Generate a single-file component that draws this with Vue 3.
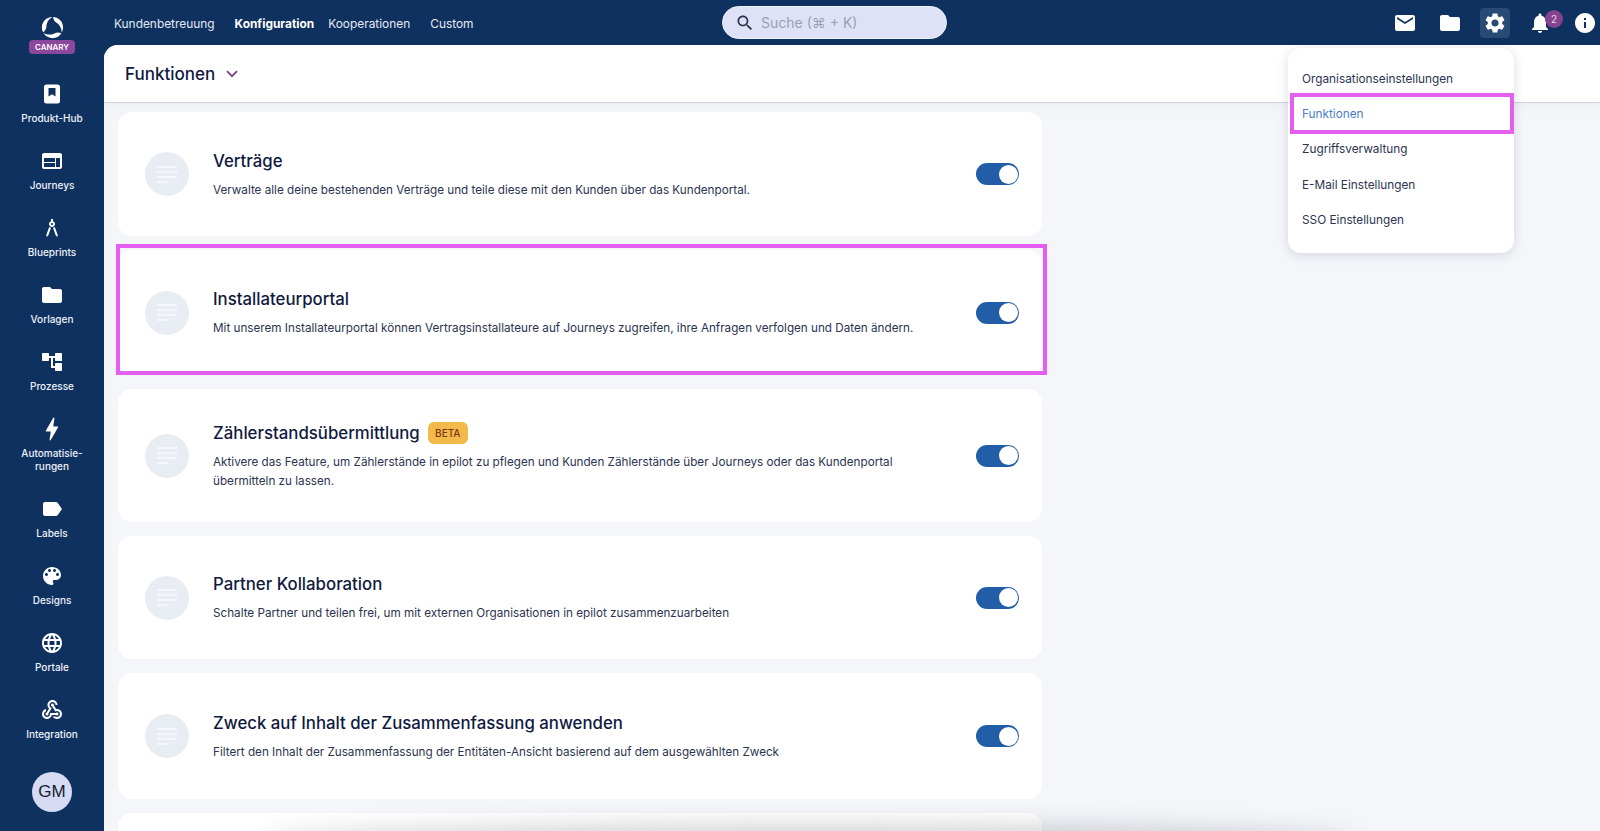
<template>
  <div class="app">
    <aside class="sidebar">
      <div class="brand">
        <svg class="logo" viewBox="0 0 24 24" fill="#fff">
          <path v-for="r in [0, 120, 240]" :key="r" :transform="`rotate(${r} 12 12)`" d="M12.500 1C18 1 22.800 5.500 23 11.500 23.100 13.500 22.600 15.500 21.600 17.200 21.600 12.500 19 8.500 15.800 6.800 14 5.800 13 3.500 12.500 1z" />
        </svg>
        <span class="canary">CANARY</span>
      </div>
      <nav class="side-nav">
        <a v-for="item in sideItems" :key="item.label" class="side-item">
          <span class="side-icon">
            <svg :width="item.size" :height="item.size" viewBox="0 0 24 24" fill="#fff" fill-rule="evenodd">
              <path :d="item.icon" />
            </svg>
          </span>
          <span class="side-label">{{ item.label }}</span>
        </a>
      </nav>
      <div class="avatar">GM</div>
    </aside>

    <div class="right">
      <header class="topbar">
        <nav class="top-nav">
          <a class="top-link">Kundenbetreuung</a>
          <a class="top-link active">Konfiguration</a>
          <a class="top-link">Kooperationen</a>
          <a class="top-link">Custom</a>
        </nav>
        <div class="search">
          <svg viewBox="0 0 24 24" width="20" height="20" fill="#2b3350"><path :d="icons.search" /></svg>
          <span>Suche (⌘ + K)</span>
        </div>
        <div class="top-icons">
          <span class="top-btn"><svg viewBox="0 0 24 24" width="24" height="24" fill="#fff"><path :d="icons.mail" /></svg></span>
          <span class="top-btn"><svg viewBox="0 0 24 24" width="24" height="24" fill="#fff"><path :d="icons.folder" /></svg></span>
          <span class="top-btn on"><svg viewBox="0 0 24 24" width="24" height="24" fill="#fff"><path :d="icons.gear" /></svg></span>
          <span class="top-btn bell">
            <svg viewBox="0 0 24 24" width="24" height="24" fill="#fff"><path :d="icons.bell" /></svg>
            <b class="badge">2</b>
          </span>
          <span class="top-btn"><svg viewBox="0 0 24 24" width="24" height="24" fill="#fff"><path :d="icons.info" /></svg></span>
        </div>
      </header>

      <main class="main">
        <div class="page-head">
          <h1>Funktionen</h1>
          <svg viewBox="0 0 12 8" width="12" height="8" fill="none" stroke="#7b3f8f" stroke-width="1.7"><path d="M1 1.200l5 5 5-5" /></svg>
        </div>
        <section class="cards">
          <article
            v-for="card in cards"
            :key="card.title"
            class="card"
            :class="{ marked: card.marked }"
            :style="{ height: card.height + 'px' }"
          >
            <div class="round-icon">
              <i></i><i></i><i></i><i class="short"></i>
            </div>
            <div class="card-text">
              <h2>{{ card.title }}<span v-if="card.beta" class="beta">BETA</span></h2>
              <p>{{ card.text }}</p>
            </div>
            <span v-if="card.text" class="toggle"><span class="knob"></span></span>
          </article>
        </section>
        <div class="floor-shadow"></div>
      </main>
    </div>

    <div class="menu">
      <a v-for="m in menuItems" :key="m" class="menu-item" :class="{ current: m === 'Funktionen' }">{{ m }}</a>
    </div>
  </div>
</template>

<script setup>
const icons = {
  search: 'M15.500 14h-.79l-.28-.27C15.410 12.590 16 11.110 16 9.500 16 5.910 13.090 3 9.500 3S3 5.910 3 9.500 5.910 16 9.500 16c1.610 0 3.090-.59 4.230-1.570l.27.28v.79l5 4.990L20.490 19l-4.990-5zm-6 0C7.010 14 5 11.990 5 9.500S7.010 5 9.500 5 14 7.010 14 9.500 11.990 14 9.500 14z',
  mail: 'M20 4H4c-1.100 0-1.990.9-1.990 2L2 18c0 1.100.9 2 2 2h16c1.100 0 2-.9 2-2V6c0-1.100-.9-2-2-2zm0 4l-8 5-8-5V6l8 5 8-5v2z',
  folder: 'M10 4H4c-1.100 0-1.990.9-1.990 2L2 18c0 1.100.9 2 2 2h16c1.100 0 2-.9 2-2V8c0-1.100-.9-2-2-2h-8l-2-2z',
  gear: 'M19.140 12.940c.04-.3.06-.61.06-.94 0-.32-.02-.64-.07-.94l2.030-1.580c.18-.14.23-.41.12-.61l-1.920-3.320c-.12-.22-.37-.29-.59-.22l-2.390.96c-.5-.38-1.030-.7-1.620-.94l-.36-2.540c-.04-.24-.24-.41-.48-.41h-3.840c-.24 0-.43.17-.47.41l-.36 2.540c-.59.24-1.130.57-1.620.94l-2.390-.96c-.22-.08-.47 0-.59.22L2.740 8.870c-.12.21-.08.47.12.61l2.030 1.580c-.05.3-.09.63-.09.94s.02.64.07.94l-2.030 1.580c-.18.14-.23.41-.12.61l1.920 3.320c.12.22.37.29.59.22l2.390-.96c.5.38 1.030.7 1.620.94l.36 2.540c.05.24.24.41.48.41h3.840c.24 0 .44-.17.47-.41l.36-2.540c.59-.24 1.130-.56 1.620-.94l2.390.96c.22.08.47 0 .59-.22l1.920-3.320c.12-.22.07-.47-.12-.61l-2.010-1.580zM12 15.600c-1.980 0-3.600-1.620-3.600-3.600s1.620-3.600 3.600-3.600 3.600 1.620 3.600 3.600-1.620 3.600-3.600 3.600z',
  bell: 'M12 22c1.100 0 2-.9 2-2h-4c0 1.100.89 2 2 2zm6-6v-5c0-3.070-1.640-5.640-4.500-6.320V4c0-.83-.67-1.500-1.500-1.500s-1.500.67-1.500 1.500v.68C7.630 5.360 6 7.920 6 11v5l-2 2v1h16v-1l-2-2z',
  info: 'M12 2C6.480 2 2 6.480 2 12s4.480 10 10 10 10-4.480 10-10S17.520 2 12 2zm1 15h-2v-6h2v6zm0-8h-2V7h2v2z',
}

const sideItems = [
  { label: 'Produkt-Hub', size: 24, icon: 'M6.500 2.500h11A2.500 2.500 0 0120 5v14a2.500 2.500 0 01-2.500 2.500h-11A2.500 2.500 0 014 19V5a2.500 2.500 0 012.500-2.500zM8.500 6v8.500l3.500-2.200 3.500 2.200V6z' },
  { label: 'Journeys', size: 24, icon: 'M20 4H4c-1.100 0-1.990.9-1.990 2L2 18c0 1.100.9 2 2 2h16c1.100 0 2-.9 2-2V6c0-1.100-.9-2-2-2zm-5 14H4v-4h11v4zm0-5H4V9h11v4zm5 5h-4V9h4v9z' },
  { label: 'Blueprints', size: 24, icon: 'M6.360 18.780L6.610 21l1.620-1.540 2.770-7.600c-.68-.17-1.280-.51-1.770-.98L6.360 18.780zM14.770 10.880c-.49.47-1.100.81-1.770.98l2.770 7.600L17.390 21l.26-2.220-2.880-7.900zM15 8c0-1.300-.84-2.400-2-2.820V3h-2v2.180C9.840 5.600 9 6.700 9 8c0 1.660 1.340 3 3 3s3-1.340 3-3zm-3 1c-.55 0-1-.45-1-1s.45-1 1-1 1 .45 1 1-.45 1-1 1z' },
  { label: 'Vorlagen', size: 24, icon: icons.folder },
  { label: 'Prozesse', size: 24, icon: 'M22 11V3.800c0-.4-.4-.8-.8-.8h-5.400c-.4 0-.8.4-.8.8V6H9V3.800c0-.4-.4-.8-.8-.8H2.800c-.4 0-.8.4-.8.8v6.400c0 .4.4.8.8.8h5.400c.4 0 .8-.4.8-.8V8h2v10h4v2.200c0 .4.4.8.8.8h5.400c.4 0 .8-.4.8-.8v-6.400c0-.4-.4-.8-.8-.8h-5.400c-.4 0-.8.4-.8.8V16h-2V8h2v2.200c0 .4.4.8.8.8z' },
  { label: 'Automatisie-rungen', size: 30, icon: 'M11 21h-1l1-7H7.500c-.58 0-.57-.32-.38-.66.19-.34.05-.08.07-.12C8.480 10.940 10.420 7.540 13 3h1l-1 7h3.500c.49 0 .56.33.47.51l-.07.15C12.960 17.550 11 21 11 21z' },
  { label: 'Labels', size: 24, icon: 'M17.630 5.840C17.270 5.330 16.670 5 16 5L5 5.010C3.900 5.010 3 5.900 3 7v10c0 1.100.9 1.990 2 1.990L16 19c.67 0 1.270-.33 1.630-.84L22 12l-4.370-6.160z' },
  { label: 'Designs', size: 24, icon: 'M12 3c-4.970 0-9 4.030-9 9s4.030 9 9 9c.83 0 1.500-.67 1.500-1.500 0-.39-.15-.74-.39-1.010-.23-.26-.38-.61-.38-.99 0-.83.67-1.500 1.500-1.500H16c2.760 0 5-2.240 5-5 0-4.420-4.030-8-9-8zm-5.500 9c-.83 0-1.500-.67-1.500-1.500S5.670 9 6.500 9 8 9.670 8 10.500 7.330 12 6.500 12zm3-4C8.670 8 8 7.330 8 6.500S8.670 5 9.500 5s1.500.67 1.500 1.500S10.330 8 9.500 8zm5 0c-.83 0-1.500-.67-1.500-1.500S13.670 5 14.500 5s1.500.67 1.500 1.500S15.330 8 14.500 8zm3 4c-.83 0-1.500-.67-1.500-1.500S16.670 9 17.500 9s1.500.67 1.500 1.500-.67 1.500-1.500 1.500z' },
  { label: 'Portale', size: 24, icon: 'M11.990 2C6.470 2 2 6.480 2 12s4.470 10 9.990 10C17.520 22 22 17.520 22 12S17.520 2 11.990 2zm6.930 6h-2.950c-.32-1.250-.78-2.450-1.380-3.560 1.840.63 3.370 1.910 4.330 3.560zM12 4.040c.83 1.200 1.480 2.530 1.910 3.960h-3.820c.43-1.430 1.080-2.760 1.910-3.960zM4.260 14C4.100 13.360 4 12.690 4 12s.1-1.360.26-2h3.380c-.08.66-.14 1.320-.14 2 0 .68.06 1.340.14 2H4.260zm.82 2h2.950c.32 1.250.78 2.450 1.380 3.560-1.840-.63-3.370-1.900-4.330-3.560zm2.950-8H5.080c.96-1.660 2.490-2.930 4.330-3.560C8.810 5.550 8.350 6.750 8.030 8zM12 19.960c-.83-1.200-1.480-2.530-1.910-3.960h3.820c-.43 1.430-1.080 2.760-1.910 3.960zM14.340 14H9.660c-.09-.66-.16-1.320-.16-2 0-.68.07-1.350.16-2h4.680c.09.65.16 1.320.16 2 0 .68-.07 1.340-.16 2zm.25 5.560c.6-1.110 1.060-2.310 1.380-3.560h2.950c-.96 1.650-2.490 2.930-4.330 3.560zM16.360 14c.08-.66.14-1.320.14-2 0-.68-.06-1.340-.14-2h3.380c.16.64.26 1.310.26 2s-.1 1.360-.26 2h-3.380z' },
  { label: 'Integration', size: 24, icon: 'M10 15h5.880c.27-.31.67-.5 1.120-.5.83 0 1.500.67 1.500 1.500s-.67 1.500-1.500 1.500c-.44 0-.84-.19-1.120-.5H11.900c-.46 2.280-2.480 4-4.900 4-2.760 0-5-2.240-5-5 0-2.420 1.720-4.440 4-4.900v2.070c-1.160.41-2 1.530-2 2.830 0 1.650 1.350 3 3 3s3-1.350 3-3v-1zm2.500-11c1.650 0 3 1.350 3 3h2c0-2.760-2.240-5-5-5s-5 2.240-5 5c0 1.430.6 2.710 1.550 3.620l-2.350 3.900c-.68.14-1.200.75-1.200 1.480 0 .83.67 1.500 1.500 1.500s1.500-.67 1.500-1.500c0-.16-.02-.31-.07-.45l3.380-5.630C10.490 9.610 9.500 8.420 9.500 7c0-1.650 1.350-3 3-3zm4.500 9c-.64 0-1.230.2-1.720.54l-3.050-5.070C11.530 8.350 11 7.740 11 7c0-.83.67-1.500 1.500-1.500S14 6.170 14 7c0 .15-.02.29-.06.43l2.190 3.650c.28-.05.57-.08.87-.08 2.760 0 5 2.240 5 5s-2.240 5-5 5c-1.850 0-3.470-1.010-4.330-2.500h2.670c.48.32 1.050.5 1.660.5 1.650 0 3-1.350 3-3s-1.350-3-3-3z' },
]

const cards = [
  { title: 'Verträge', text: 'Verwalte alle deine bestehenden Verträge und teile diese mit den Kunden über das Kundenportal.', height: 124 },
  { title: 'Installateurportal', text: 'Mit unserem Installateurportal können Vertragsinstallateure auf Journeys zugreifen, ihre Anfragen verfolgen und Daten ändern.', height: 125, marked: true },
  { title: 'Zählerstandsübermittlung', beta: true, text: 'Aktivere das Feature, um Zählerstände in epilot zu pflegen und Kunden Zählerstände über Journeys oder das Kundenportal übermitteln zu lassen.', height: 133 },
  { title: 'Partner Kollaboration', text: 'Schalte Partner und teilen frei, um mit externen Organisationen in epilot zusammenzuarbeiten', height: 123 },
  { title: 'Zweck auf Inhalt der Zusammenfassung anwenden', text: 'Filtert den Inhalt der Zusammenfassung der Entitäten-Ansicht basierend auf dem ausgewählten Zweck', height: 126 },
  { title: '', text: '', height: 126 },
]

const menuItems = ['Organisationseinstellungen', 'Funktionen', 'Zugriffsverwaltung', 'E-Mail Einstellungen', 'SSO Einstellungen']
</script>

<style>
html, body {
  margin: 0;
  height: 100%;
  overflow: hidden;
}
</style>

<style scoped>
.app {
  position: relative;
  display: flex;
  width: 1600px;
  height: 831px;
  overflow: hidden;
  background: #0f3160;
  font-family: "Inter", "Lato", sans-serif;
  color: #10193f;
}

.sidebar {
  width: 104px;
  flex: none;
  display: flex;
  flex-direction: column;
  align-items: center;
  color: #fff;
}

.brand {
  height: 72px;
  padding-top: 16px;
  box-sizing: border-box;
  display: flex;
  flex-direction: column;
  align-items: center;
}

.logo {
  width: 23px;
  height: 23px;
}

.canary {
  width: 46px;
  height: 14px;
  margin-top: 1px;
  border-radius: 4px;
  background: #8b479b;
  font-size: 8px;
  font-weight: 600;
  line-height: 14px;
  text-align: center;
}

.side-nav {
  display: flex;
  flex-direction: column;
  align-items: center;
  width: 100%;
}

.side-item {
  display: flex;
  flex-direction: column;
  align-items: center;
  width: 72px;
  padding-top: 10px;
  padding-bottom: 14.500px;
}

.side-icon {
  height: 24px;
  display: flex;
  align-items: center;
  justify-content: center;
}

.side-label {
  margin-top: 5.500px;
  font-size: 10px;
  font-weight: 500;
  line-height: 13px;
  text-align: center;
  overflow-wrap: break-word;
  color: #eef1f8;
}

.avatar {
  width: 40px;
  height: 40px;
  margin-top: 17px;
  border-radius: 50%;
  background: #d6daf3;
  color: #141a2c;
  font-family: "Liberation Sans", sans-serif;
  font-size: 17px;
  line-height: 40px;
  text-align: center;
}

.right {
  flex: 1;
  min-width: 0;
  display: flex;
  flex-direction: column;
}

.topbar {
  position: relative;
  height: 45px;
  flex: none;
  display: flex;
  align-items: center;
}

.top-nav {
  display: flex;
  gap: 20px;
  padding: 1px 0 0 10px;
}

.top-link {
  font-size: 11.900px;
  color: #e6eaf4;
}

.top-link.active {
  margin-right: -6px;
  font-weight: 700;
  color: #fff;
}

.search {
  position: absolute;
  left: 618px;
  top: 6px;
  width: 225px;
  height: 33px;
  box-sizing: border-box;
  padding-left: 12px;
  display: flex;
  align-items: center;
  gap: 6px;
  border: 1px solid #f0f2fc;
  border-radius: 17px;
  background: #dfe2f7;
  font-size: 14px;
  color: #9a9fb8;
}

.top-icons {
  margin-left: auto;
  display: flex;
  align-items: center;
  gap: 15px;
}

.top-btn {
  position: relative;
  width: 30px;
  height: 30px;
  display: flex;
  align-items: center;
  justify-content: center;
  border-radius: 4px;
}

.top-btn.on {
  background: #2a4a76;
}

.badge {
  position: absolute;
  left: 20px;
  top: 2px;
  width: 18px;
  height: 18px;
  border-radius: 50%;
  background: #86418f;
  color: #e9d8ef;
  font-size: 10px;
  font-weight: 400;
  line-height: 18px;
  text-align: center;
}

.main {
  position: relative;
  flex: 1;
  min-height: 0;
  overflow: hidden;
  border-top-left-radius: 14px;
  background: #f4f6fa;
}

.page-head {
  position: relative;
  height: 58px;
  box-sizing: border-box;
  padding-left: 21px;
  display: flex;
  align-items: center;
  gap: 11px;
  background: #fff;
  border-bottom: 1px solid #cfd2d8;
  box-shadow: 0 4px 12px rgba(30, 40, 70, 0.04);
}

.page-head h1 {
  margin: 0;
  font-size: 17px;
  font-weight: 500;
  color: #10193f;
}

.cards {
  display: flex;
  flex-direction: column;
  gap: 14px;
  width: 924px;
  margin: 9px 0 0 14px;
}

.card {
  position: relative;
  flex: none;
  box-sizing: border-box;
  display: flex;
  align-items: center;
  padding: 0 23px 0 27px;
  border-radius: 14px;
  background: #fff;
}

.card.marked::after {
  content: "";
  position: absolute;
  left: -2.500px;
  right: -5px;
  top: -6px;
  bottom: 0;
  border: 4.500px solid #e45ff0;
}

.round-icon {
  width: 44px;
  height: 44px;
  flex: none;
  border-radius: 50%;
  background: #e8edf4;
  display: flex;
  flex-direction: column;
  justify-content: center;
  gap: 3px;
  padding-left: 12px;
  box-sizing: border-box;
}

.round-icon i {
  width: 20px;
  height: 2px;
  background: #f5f7fb;
}

.round-icon i.short {
  width: 12px;
}

.card-text {
  flex: 1;
  min-width: 0;
  margin-left: 24px;
  padding-right: 40px;
}

.card-text h2 {
  margin: 0 0 8px;
  display: flex;
  align-items: center;
  min-height: 24px;
  font-size: 16.800px;
  font-weight: 500;
  line-height: 24px;
  color: #10193f;
}

.card-text p {
  margin: 0;
  font-size: 11.700px;
  line-height: 19px;
  color: #2c3452;
}

.beta {
  margin-left: 8px;
  width: 40px;
  height: 22px;
  border-radius: 6px;
  background: #f2b94b;
  color: #7a3a10;
  font-size: 10px;
  font-weight: 500;
  line-height: 22px;
  text-align: center;
}

.toggle {
  width: 43px;
  height: 22px;
  flex: none;
  box-sizing: border-box;
  border-radius: 11px;
  background: #225ea8;
  display: flex;
  justify-content: flex-end;
  padding: 1.500px;
}

.knob {
  width: 19px;
  height: 19px;
  border-radius: 50%;
  background: #fff;
}

.floor-shadow {
  position: absolute;
  left: 170px;
  right: 250px;
  bottom: -22px;
  height: 16px;
  border-radius: 50%;
  box-shadow: 0 -2px 24px 10px rgba(40, 44, 52, 0.22);
}

.menu {
  position: absolute;
  left: 1288px;
  top: 48px;
  width: 226px;
  height: 205px;
  box-sizing: border-box;
  padding-top: 14px;
  border-radius: 13px;
  background: #fff;
  box-shadow: 0 2px 12px rgba(40, 50, 80, 0.16);
}

.menu-item {
  position: relative;
  display: block;
  height: 35.200px;
  padding-left: 14px;
  font-size: 11.800px;
  line-height: 35.200px;
  color: #2c3452;
}

.menu-item.current {
  color: #4b7ec6;
}

.menu-item.current::after {
  content: "";
  position: absolute;
  left: 2px;
  right: 0;
  top: -4px;
  bottom: -2px;
  border: 4px solid #e45ff0;
}
</style>
